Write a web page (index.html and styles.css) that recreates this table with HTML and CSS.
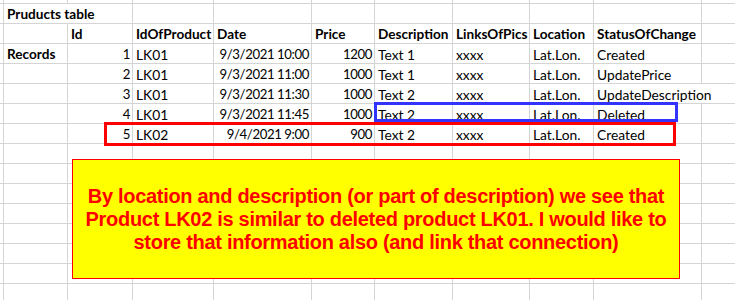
FILE: index.html
```html
<!DOCTYPE html>
<html>
<head>
<meta charset="utf-8">
<link rel="stylesheet" href="styles.css">
</head>
<body>
<div class="sheet">
  <div class="row">
    <div class="cell b span2">Pruducts table</div>
  </div>
  <div class="row">
    <div class="cell"></div>
    <div class="cell b">Id</div>
    <div class="cell b">IdOfProduct</div>
    <div class="cell b">Date</div>
    <div class="cell b">Price</div>
    <div class="cell b">Description</div>
    <div class="cell b">LinksOfPics</div>
    <div class="cell b">Location</div>
    <div class="cell b">StatusOfChange</div>
  </div>
  <div class="row">
    <div class="cell b">Records</div>
    <div class="cell r">1</div>
    <div class="cell">LK01</div>
    <div class="cell r">9/3/2021 10:00</div>
    <div class="cell r">1200</div>
    <div class="cell">Text 1</div>
    <div class="cell">xxxx</div>
    <div class="cell">Lat.Lon.</div>
    <div class="cell">Created</div>
  </div>
  <div class="row">
    <div class="cell"></div>
    <div class="cell r">2</div>
    <div class="cell">LK01</div>
    <div class="cell r">9/3/2021 11:00</div>
    <div class="cell r">1000</div>
    <div class="cell">Text 1</div>
    <div class="cell">xxxx</div>
    <div class="cell">Lat.Lon.</div>
    <div class="cell">UpdatePrice</div>
  </div>
  <div class="row">
    <div class="cell"></div>
    <div class="cell r">3</div>
    <div class="cell">LK01</div>
    <div class="cell r">9/3/2021 11:30</div>
    <div class="cell r">1000</div>
    <div class="cell">Text 2</div>
    <div class="cell">xxxx</div>
    <div class="cell">Lat.Lon.</div>
    <div class="cell span2">UpdateDescription</div>
  </div>
  <div class="row">
    <div class="cell"></div>
    <div class="cell r">4</div>
    <div class="cell">LK01</div>
    <div class="cell r">9/3/2021 11:45</div>
    <div class="cell r">1000</div>
    <div class="cell">Text 2</div>
    <div class="cell">xxxx</div>
    <div class="cell">Lat.Lon.</div>
    <div class="cell">Deleted</div>
  </div>
  <div class="row">
    <div class="cell"></div>
    <div class="cell r">5</div>
    <div class="cell">LK02</div>
    <div class="cell r">9/4/2021 9:00</div>
    <div class="cell r">900</div>
    <div class="cell">Text 2</div>
    <div class="cell">xxxx</div>
    <div class="cell">Lat.Lon.</div>
    <div class="cell">Created</div>
  </div>

  <div class="mark-blue"></div>
  <div class="mark-red"></div>
  <div class="note">By location and description (or part of description) we see that Product LK02 is similar to deleted product LK01. I would like to store that information also (and link that connection)</div>
</div>
</body>
</html>
```

FILE: styles.css
```css
html, body {
  margin: 0;
  padding: 0;
  background: #fff;
}

.sheet {
  position: relative;
  width: 735px;
  height: 300px;
  overflow: hidden;
  box-sizing: border-box;
  padding: 4px 0 0 4px;
  display: flex;
  flex-direction: column;
  gap: 1px;
  font-family: Lato, "Liberation Sans", sans-serif;
  font-size: 13.8px;
  color: #000;
  background:
    linear-gradient(#d4d4d4, #d4d4d4) 3px 0 / 1px 100% no-repeat,
    linear-gradient(#d4d4d4, #d4d4d4) 67px 0 / 1px 100% no-repeat,
    linear-gradient(#d4d4d4, #d4d4d4) 132px 0 / 1px 100% no-repeat,
    linear-gradient(#d4d4d4, #d4d4d4) 213px 0 / 1px 100% no-repeat,
    linear-gradient(#d4d4d4, #d4d4d4) 311px 0 / 1px 100% no-repeat,
    linear-gradient(#d4d4d4, #d4d4d4) 374px 0 / 1px 100% no-repeat,
    linear-gradient(#d4d4d4, #d4d4d4) 452px 0 / 1px 100% no-repeat,
    linear-gradient(#d4d4d4, #d4d4d4) 529px 0 / 1px 100% no-repeat,
    linear-gradient(#d4d4d4, #d4d4d4) 593px 0 / 1px 100% no-repeat,
    linear-gradient(#d4d4d4, #d4d4d4) 701px 0 / 1px 100% no-repeat,
    repeating-linear-gradient(to bottom, transparent 0 3px, #d4d4d4 3px 4px, transparent 4px 20px),
    #fff;
}

.row {
  display: grid;
  grid-template-columns: 63px 64px 80px 97px 62px 77px 76px 63px 107px 33px;
  column-gap: 1px;
  height: 19px;
  flex: none;
}

.cell {
  line-height: 19px;
  padding: 1px 3px 0 3px;
  white-space: nowrap;
  overflow: visible;
  box-sizing: border-box;
  height: 19px;
}

.cell.b {
  font-weight: 700;
  font-size: 13.6px;
}

.cell.r {
  text-align: right;
  font-size: 13.2px;
  letter-spacing: -0.4px;
  padding-right: 2px;
}

.cell.span2 {
  grid-column: span 2;
  background: #fff;
}

.mark-blue {
  position: absolute;
  left: 374px;
  top: 102px;
  width: 304px;
  height: 20px;
  box-sizing: border-box;
  border: 3px solid #3333ff;
}

.mark-red {
  position: absolute;
  left: 104px;
  top: 122px;
  width: 572px;
  height: 24px;
  box-sizing: border-box;
  border: 3px solid #ff0000;
}

.note {
  position: absolute;
  left: 72px;
  top: 159px;
  width: 608px;
  height: 120px;
  box-sizing: border-box;
  border: 1px solid #ff0000;
  background: #ffff00;
  color: #ff0000;
  font-family: "Liberation Sans", Arial, sans-serif;
  font-weight: 700;
  font-size: 20px;
  letter-spacing: -0.3px;
  line-height: 23px;
  text-align: center;
  display: flex;
  align-items: center;
  justify-content: center;
  padding: 0 8px;
}
```
